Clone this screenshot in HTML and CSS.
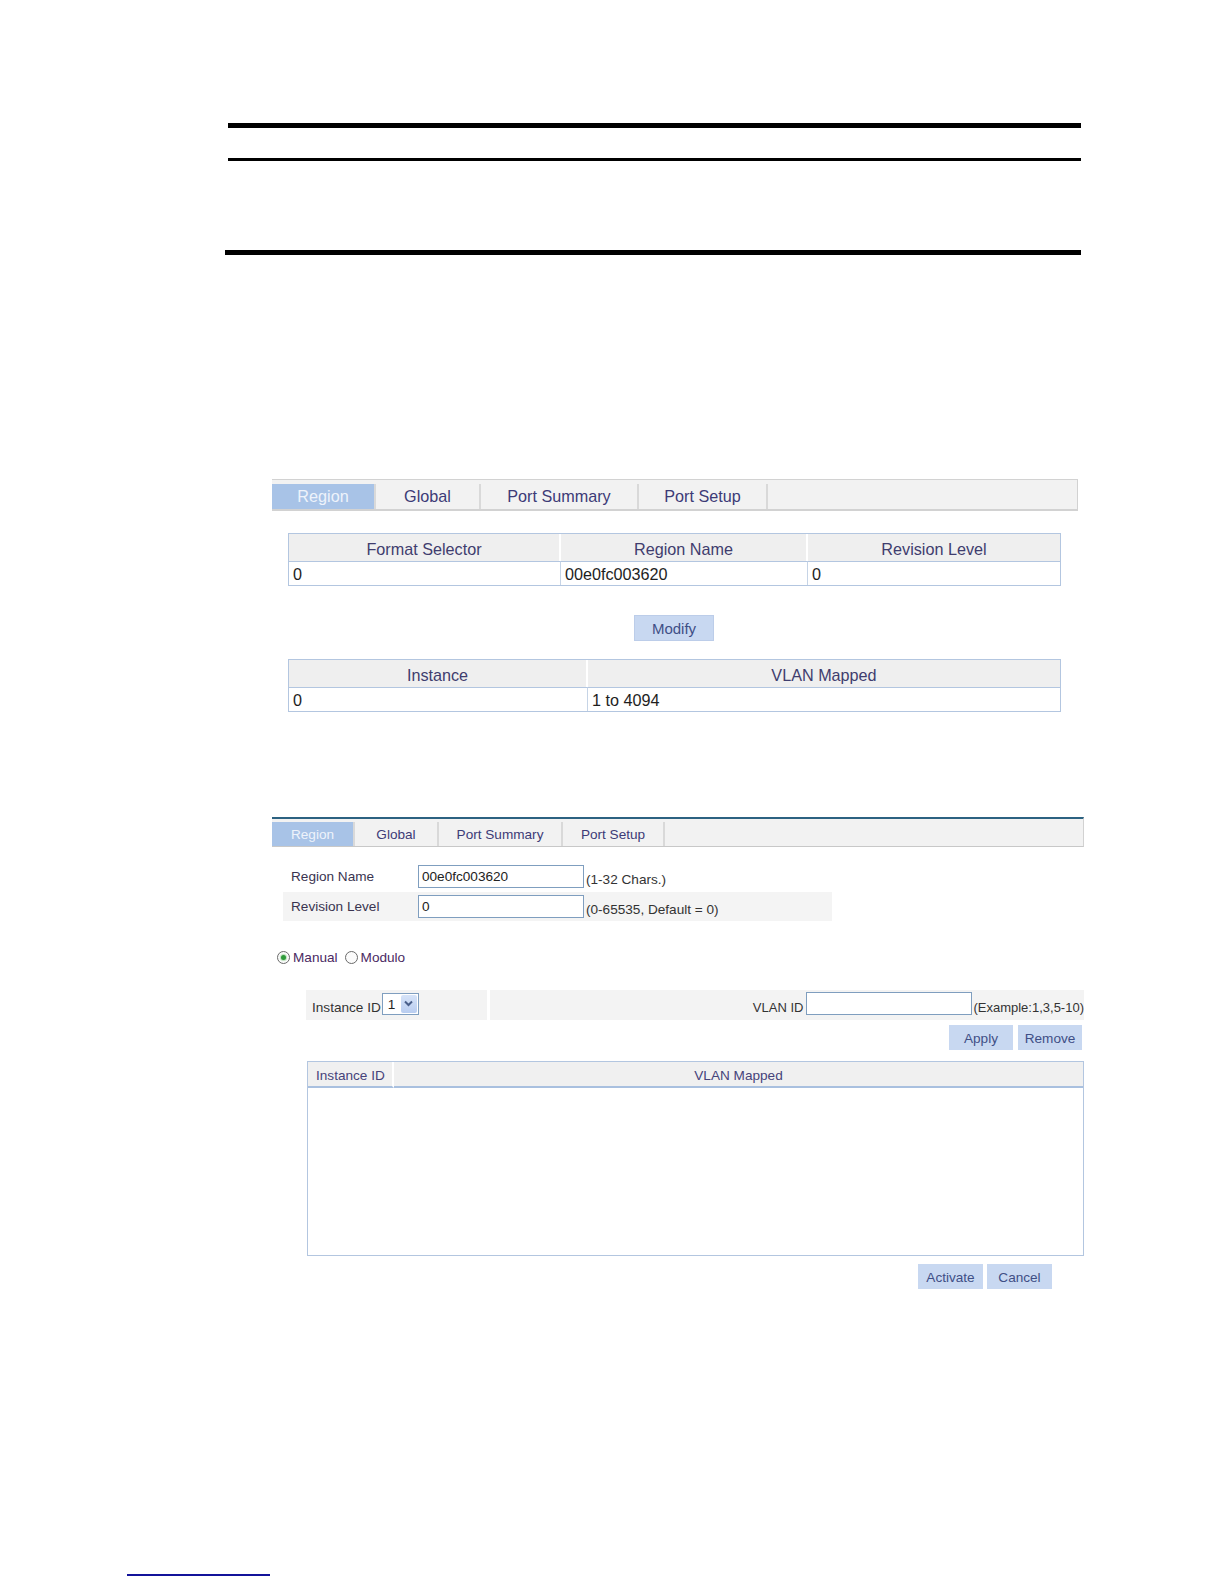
FILE: index.html
```html
<!DOCTYPE html>
<html>
<head>
<meta charset="utf-8">
<title>MSTP Region</title>
<link rel="stylesheet" href="styles.css">
</head>
<body>
<div class="page">
  <div class="rules">
    <div class="rule r1"></div>
    <div class="rule r2"></div>
    <div class="rule r3"></div>
  </div>

  <div class="shot1">
    <div class="tabs tabs1">
      <div class="tab active">Region</div>
      <div class="tab">Global</div>
      <div class="tab">Port Summary</div>
      <div class="tab">Port Setup</div>
      <div class="tab filler"></div>
    </div>

    <div class="tbl tbl1">
      <div class="th">Format Selector</div>
      <div class="th">Region Name</div>
      <div class="th last">Revision Level</div>
      <div class="td">0</div>
      <div class="td">00e0fc003620</div>
      <div class="td last">0</div>
    </div>

    <div class="modify-row">
      <button class="btn btn-lg">Modify</button>
    </div>

    <div class="tbl tbl2">
      <div class="th">Instance</div>
      <div class="th last">VLAN Mapped</div>
      <div class="td">0</div>
      <div class="td last">1 to 4094</div>
    </div>
  </div>

  <div class="shot2">
    <div class="tabs tabs2">
      <div class="tab active">Region</div>
      <div class="tab">Global</div>
      <div class="tab">Port Summary</div>
      <div class="tab">Port Setup</div>
      <div class="tab filler"></div>
    </div>

    <div class="form">
      <div class="frow">
        <span class="flabel">Region Name</span>
        <span class="input">00e0fc003620</span>
        <span class="hint">(1-32 Chars.)</span>
      </div>
      <div class="frow alt">
        <span class="flabel">Revision Level</span>
        <span class="input">0</span>
        <span class="hint">(0-65535, Default = 0)</span>
      </div>
    </div>

    <div class="radios">
      <span class="radio checked"></span><span class="rlabel">Manual</span>
      <span class="radio"></span><span class="rlabel">Modulo</span>
    </div>

    <div class="inst-row">
      <div class="cell cell-left">
        <span class="lbl">Instance ID</span>
        <span class="select">
          <span class="sel-val">1</span>
          <span class="sel-btn">
            <svg width="9" height="7" viewBox="0 0 9 7"><path d="M1 1.5 L4.5 5 L8 1.5" fill="none" stroke="#4a5f8a" stroke-width="2"/></svg>
          </span>
        </span>
      </div>
      <div class="cell cell-right">
        <span class="lbl">VLAN ID</span>
        <span class="input input-vlan"></span>
        <span class="hint">(Example:1,3,5-10)</span>
      </div>
    </div>

    <div class="btn-row btn-row1">
      <button class="btn btn-sm">Apply</button>
      <button class="btn btn-sm">Remove</button>
    </div>

    <div class="tbl3">
      <div class="th3 first">Instance ID</div>
      <div class="th3 center">VLAN Mapped</div>
      <div class="body3"></div>
    </div>

    <div class="btn-row btn-row2">
      <button class="btn btn-sm btn-wide">Activate</button>
      <button class="btn btn-sm btn-wide">Cancel</button>
    </div>
  </div>

  <div class="footer-line"></div>
</div>
</body>
</html>
```

FILE: styles.css
```css
html, body {
  margin: 0;
  padding: 0;
  background: #ffffff;
}

body {
  font-family: "Liberation Sans", Arial, sans-serif;
  color: #222222;
}

.page {
  padding-top: 123px;
  width: 1224px;
  box-sizing: border-box;
}

/* top rules */
.rules {
  margin-left: 228px;
  width: 853px;
}

.rule {
  background: #000000;
}

.r1 {
  height: 5px;
}

.r2 {
  height: 3px;
  margin-top: 30px;
}

.r3 {
  height: 5px;
  margin-top: 89px;
  margin-left: -3px;
  width: 856px;
}

/* tab bars */
.tabs {
  display: grid;
  background: #f2f2f2;
  box-sizing: border-box;
}

.tab {
  display: flex;
  align-items: center;
  justify-content: center;
  color: #3d3b77;
  border-right: 2px solid #d9d9d9;
  box-sizing: border-box;
  white-space: nowrap;
}

.tab.filler {
  border-right: none;
}

.tab.active {
  background: #a8c3e7;
  color: #eef3fb;
}

/* screenshot 1 */
.shot1 {
  margin-top: 224px;
  margin-left: 272px;
  width: 806px;
}

.tabs1 {
  height: 32px;
  grid-template-columns: 104px 105px 158px 129px 1fr;
  border-top: 1px solid #d2d2d2;
  border-bottom: 2px solid #d2d2d2;
  border-right: 1px solid #d2d2d2;
  font-size: 16.2px;
  padding-top: 4px;
}

.tbl {
  display: grid;
  margin-left: 16px;
  width: 773px;
  border: 1px solid #b3c6e0;
  box-sizing: border-box;
  font-size: 16.2px;
}

.tbl1 {
  margin-top: 22px;
  grid-template-columns: 272px 247px 1fr;
}

.tbl2 {
  margin-top: 18px;
  grid-template-columns: 299px 1fr;
}

.th {
  height: 27px;
  background: #efefef;
  color: #3f3d6e;
  display: flex;
  align-items: center;
  justify-content: center;
  border-right: 2px solid #ffffff;
  padding-top: 3px;
  box-sizing: border-box;
}

.th.last {
  border-right: none;
}

.td {
  height: 24px;
  border-top: 1px solid #b3c6e0;
  border-right: 1px solid #c6d4e6;
  display: flex;
  align-items: center;
  padding-left: 4px;
  padding-top: 1px;
  box-sizing: border-box;
  color: #1e1e1e;
}

.td.last {
  border-right: none;
}

.modify-row {
  margin-top: 29px;
  height: 26px;
  display: flex;
  justify-content: center;
  margin-left: -2px;
}

.btn {
  border: none;
  background: #c8d8f1;
  color: #3f4f86;
  font-family: "Liberation Sans", Arial, sans-serif;
  padding: 0;
  margin: 0;
}

.btn-lg {
  width: 80px;
  height: 26px;
  font-size: 15px;
  border: 1px solid #bccde9;
  padding-top: 1px;
}

/* screenshot 2 */
.shot2 {
  margin-top: 105px;
  margin-left: 272px;
  width: 812px;
  font-size: 13.6px;
}

.tabs2 {
  height: 30px;
  grid-template-columns: 83px 84px 124px 102px 1fr;
  border-top: 2px solid #2c6281;
  border-bottom: 1px solid #c8c8c8;
  border-right: 1px solid #d2d2d2;
  font-size: 13.6px;
  padding-top: 3px;
}

.form {
  margin-top: 15px;
  margin-left: 11px;
  width: 549px;
  display: grid;
  row-gap: 1px;
}

.frow {
  height: 29px;
  display: grid;
  grid-template-columns: 135px 167px 1fr;
  align-items: center;
}

.frow.alt {
  background: #f4f4f4;
}

.flabel {
  padding-left: 8px;
  color: #3a3450;
}

.input {
  display: flex;
  align-items: center;
  height: 23px;
  width: 166px;
  border: 1px solid #7f9ebf;
  background: #ffffff;
  box-sizing: border-box;
  padding-left: 3px;
  color: #222222;
}

.hint {
  padding-left: 1px;
  padding-top: 5px;
  color: #333333;
  white-space: nowrap;
}

.radios {
  margin-top: 29px;
  margin-left: 5px;
  height: 15px;
  display: flex;
  align-items: center;
  font-size: 13.6px;
}

.radio {
  width: 11px;
  height: 11px;
  border: 1px solid #6a6a6a;
  border-radius: 50%;
  background: #fbfbfb;
  display: inline-flex;
  align-items: center;
  justify-content: center;
  box-sizing: content-box;
}

.radio.checked::after {
  content: "";
  width: 5px;
  height: 5px;
  border-radius: 50%;
  background: #2f9a3a;
  box-shadow: 0 0 1px 1px #b9e0b9;
}

.rlabel {
  color: #4b2a63;
  margin-left: 3px;
  margin-right: 7px;
}

.inst-row {
  margin-top: 25px;
  margin-left: 34px;
  width: 778px;
  height: 30px;
  display: grid;
  grid-template-columns: 181px 1fr;
  column-gap: 3px;
}

.cell {
  background: #f3f3f3;
  display: flex;
  align-items: center;
}

.cell-left {
  padding-left: 6px;
}

.cell-right {
  justify-content: flex-end;
  font-size: 13px;
}

.lbl {
  color: #333333;
  padding-top: 5px;
  margin-right: 3px;
}

.cell-left .lbl {
  margin-right: 1px;
}

.select {
  display: inline-flex;
  width: 37px;
  height: 22px;
  border: 1px solid #7f9ebf;
  background: #ffffff;
  box-sizing: border-box;
  margin-top: -3px;
}

.sel-val {
  flex: 1;
  padding-left: 5px;
  line-height: 21px;
  color: #222222;
}

.sel-btn {
  width: 16px;
  margin: 1px;
  background: linear-gradient(#d6e3f8, #b9cdf0);
  border-radius: 2px;
  display: flex;
  align-items: center;
  justify-content: center;
}

.input-vlan {
  margin-top: -4px;
}

.btn-row {
  display: flex;
  justify-content: flex-end;
  gap: 5px;
}

.btn-row1 {
  margin-top: 5px;
  padding-right: 2px;
}

.btn-sm {
  width: 64px;
  height: 25px;
  font-size: 13.6px;
  padding-top: 2px;
}

.btn-wide {
  width: 65px;
}

.tbl3 {
  margin-top: 11px;
  margin-left: 35px;
  width: 777px;
  height: 195px;
  border: 1px solid #b3c6e0;
  box-sizing: border-box;
  display: grid;
  grid-template-columns: 86px 1fr;
  grid-template-rows: 26px 1fr;
}

.th3 {
  background: #f0f0f0;
  border-bottom: 2px solid #a9c0df;
  color: #46437a;
  display: flex;
  align-items: center;
  padding-top: 3px;
  box-sizing: border-box;
}

.th3.first {
  padding-left: 8px;
  border-right: 2px solid #ffffff;
}

.th3.center {
  justify-content: center;
}

.body3 {
  grid-column: 1 / 3;
  background: #ffffff;
}

.btn-row2 {
  margin-top: 8px;
  padding-right: 32px;
  gap: 4px;
}

.footer-line {
  margin-top: 285px;
  margin-left: 127px;
  width: 143px;
  height: 2px;
  background: #13139a;
}
```
